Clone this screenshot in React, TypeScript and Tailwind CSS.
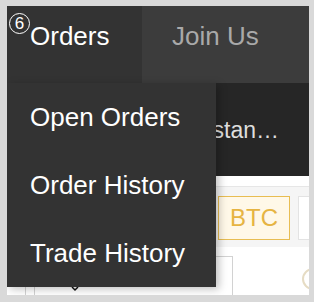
import { FC } from "react";

const font = { fontFamily: '"Liberation Sans", Arial, sans-serif' };

const menuItems = ["Open Orders", "Order History", "Trade History"];
const coins = ["", "", "BTC", ""];

const App: FC = () => {
  return (
    <div
      className="w-[314px] h-[302px] bg-[#d9d9d9] pt-[6px] pl-[7px] pr-[5px] pb-[7px]"
      style={font}
    >
      <div className="relative w-[302px] h-[289px] overflow-hidden bg-white flex flex-col">
        {/* top tabs */}
        <div className="flex h-[77px] shrink-0">
          <div className="w-[135px] bg-[#333333] pl-[23px] pt-[15px] text-[26px] leading-[30px] text-white">
            Orders
          </div>
          <div className="flex-1 bg-[#3c3c3c] pl-[30px] pt-[15px] text-[26px] leading-[30px] text-[#a9a9a9]">
            Join Us
          </div>
        </div>

        {/* dark bar */}
        <div className="h-[93px] shrink-0 bg-[#262626] flex items-center justify-end pr-[30px] pt-[2px] text-[23px] text-[#dedede]">
          Instan…
        </div>

        <div className="h-[11px] shrink-0 bg-white border-b border-[#e6e6e6]" />

        {/* coin filter */}
        <div className="h-[60px] shrink-0 bg-[#f5f5f5] flex gap-2 pl-[51px] pt-[9px]">
          {coins.map((c, i) =>
            c === "BTC" ? (
              <div
                key={i}
                className="w-[72px] h-[44px] shrink-0 flex items-center justify-center border-[1.5px] border-[#e8bd52] bg-[#fff8e8] text-[24px] text-[#e6b442]"
              >
                {c}
              </div>
            ) : (
              <div
                key={i}
                className="w-[72px] h-[44px] shrink-0 border-[1.5px] border-[#e3e3e3] bg-white"
              />
            )
          )}
        </div>

        {/* list area */}
        <div className="relative flex-1 bg-white pt-[9px] pl-[18px]">
          <div className="w-[208px] h-[60px] border border-[#d2d2d2] flex">
            <div className="w-[9px] border-r border-[#d2d2d2]" />
            <svg width="8" height="6" viewBox="0 0 8 6" className="ml-[36px] mt-[29px]">
              <path d="M1 1 L4 4 L7 1" stroke="#111" strokeWidth="1.5" fill="none" />
            </svg>
          </div>
          <div className="absolute left-[295px] top-[21px] w-[22px] h-[22px] rounded-full border-2 border-[#e6dcc4]" />
        </div>

        {/* step badge */}
        <div className="absolute left-[2px] top-[7px] w-[21px] h-[21px] rounded-full border border-white flex items-center justify-center text-[17px] leading-none text-white">
          6
        </div>

        {/* dropdown */}
        <div className="absolute left-0 top-[77px] w-[209px] h-[204px] bg-[#333333] shadow-[3px_2px_8px_rgba(0,0,0,0.25)]">
          {menuItems.map((item) => (
            <div
              key={item}
              className="h-[68px] flex items-center pl-[23px] text-[26px] text-white"
            >
              {item}
            </div>
          ))}
        </div>
      </div>
    </div>
  );
};

export default App;
